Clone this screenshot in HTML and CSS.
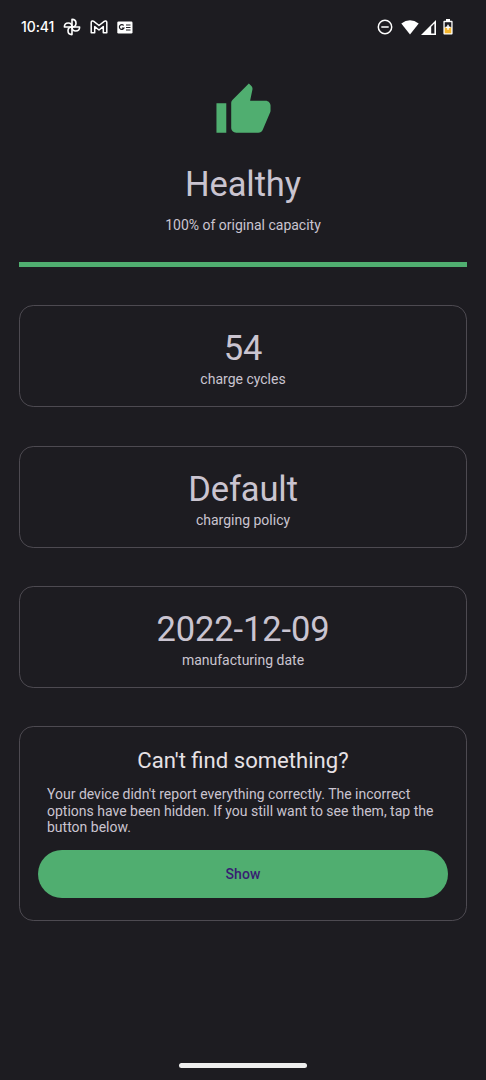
FILE: index.html
```html
<!DOCTYPE html>
<html lang="en">
<head>
<meta charset="utf-8">
<title>Battery health</title>
<link rel="stylesheet" href="styles.css">
</head>
<body>
<div class="screen">
  <header class="status">
    <span class="clock">10:41</span>
    <svg class="fan" width="18" height="18" viewBox="0 0 18 18" fill="none" stroke="#fff" stroke-width="1.600" stroke-linejoin="round">
      <path d="M9 9V1.400c2.400 0 4 1.600 4 3.800S11.400 9 9 9z"/>
      <path d="M9 9h7.600c0 2.400-1.600 4-3.800 4S9 11.400 9 9z"/>
      <path d="M9 9v7.600c-2.400 0-4-1.600-4-3.800S6.600 9 9 9z"/>
      <path d="M9 9H1.400c0-2.400 1.600-4 3.800-4S9 6.600 9 9z"/>
    </svg>
    <svg class="mail" width="18" height="14" viewBox="0 0 18 14" fill="none" stroke="#fff" stroke-width="1.500" stroke-linejoin="round">
      <path d="M1.200 12.800V2.400C1.200 1 2.800.6 3.800 1.400L9 5.500l5.200-4.100c1-.8 2.600-.4 2.600 1v10.400h-3.500V6.600L9 10 4.700 6.600v6.200z"/>
    </svg>
    <svg class="news" width="16" height="13" viewBox="0 0 16 13">
      <rect x=".3" y=".5" width="15.200" height="12" rx="1.200" fill="#fff"/>
      <path d="M6.700 4.500A2.400 2.400 0 1 0 7 7H4.900M9 4h4.500M9 6.500h4.500M9 9h4.500" fill="none" stroke="#1d1c21" stroke-width="1.200"/>
    </svg>
    <svg class="dnd" width="16" height="16" viewBox="0 0 16 16" fill="none" stroke="#fff" stroke-width="1.500">
      <circle cx="8" cy="8" r="6.700"/><path d="M4.300 8h7.400"/>
    </svg>
    <svg class="wifi" width="18" height="15" viewBox="0 0 18 15"><path d="M.3 3.500Q9-3.100 17.700 3.500L9 14.500z" fill="#fff"/></svg>
    <svg class="signal" width="15" height="15" viewBox="0 0 15 15"><path d="M0 15L15 0v15z" fill="#fff"/><path d="M10.200 6.800L13.400 3.600v9.800h-3.200z" fill="#1d1c21"/></svg>
    <svg class="battery" width="10" height="16" viewBox="0 0 10 16">
      <path d="M3 0h4v1.700h1.700q.9 0 .9.900v12q0 1-.9 1H1.300q-.9 0-.9-1v-12q0-.9.900-.9H3z" fill="#fff"/>
      <path d="M1.700 3.200h6.600v5.200H1.700z" fill="#1d1c21"/>
      <path d="M1.700 8.400h6.600v5.900H1.700z" fill="#f5b62f"/>
      <path d="M5 5.700v5M2.700 8.200h4.600" stroke="#fff" stroke-width="1.500"/>
    </svg>
  </header>
  <main class="content">
    <section class="health">
      <svg class="thumb" width="59" height="59" viewBox="0 0 24 24" fill="#50ae70">
        <path d="M1 21h4V9H1v12zm22-11c0-1.100-.9-2-2-2h-6.310l.95-4.570.03-.32c0-.41-.17-.79-.44-1.060L14.170 1 7.590 7.590C7.220 7.950 7 8.450 7 9v10c0 1.100.9 2 2 2h9c.83 0 1.540-.5 1.840-1.220l3.020-7.050c.09-.23.14-.47.14-.73v-2z"/>
      </svg>
      <h1 class="value">Healthy</h1>
      <p class="label">100% of original capacity</p>
      <div class="bar"></div>
    </section>
    <section class="card"><div class="value">54</div><div class="label">charge cycles</div></section>
    <section class="card"><div class="value">Default</div><div class="label">charging policy</div></section>
    <section class="card"><div class="value">2022-12-09</div><div class="label">manufacturing date</div></section>
    <section class="card help">
      <h2 class="title">Can't find something?</h2>
      <p class="text">Your device didn't report everything correctly. The incorrect options have been hidden. If you still want to see them, tap the button below.</p>
      <button class="show">Show</button>
    </section>
  </main>
  <div class="handle"></div>
</div>
</body>
</html>
```
FILE: styles.css
```css
* { box-sizing: border-box; margin: 0; }
body { background: #1d1c21; font-family: Roboto, sans-serif; color: #cac4d0; }
.screen { width: 486px; height: 1080px; display: flex; flex-direction: column; align-items: center; overflow: hidden; }
.status { width: 100%; height: 54px; flex: none; display: flex; align-items: center; padding: 0 33px 0 21px; color: #fff; }
.status svg { flex: none; }
.clock { width: 42px; font: 500 14px/20px Inter, sans-serif; letter-spacing: -.1px; white-space: nowrap; }
.mail { margin-left: 9px; }
.news { margin-left: 9px; }
.dnd { margin-left: auto; }
.wifi { margin-left: 8px; }
.signal { margin-left: 2px; }
.battery { margin-left: 7px; }
.content { width: 448px; display: flex; flex-direction: column; gap: 38.300px; }
.health { display: flex; flex-direction: column; align-items: center; height: 213px; padding-top: 27px; }
.value { font-size: 34.500px; line-height: 42px; font-weight: 400; letter-spacing: -.1px; text-align: center; }
.health .value { margin-top: 22.500px; }
.label { font-size: 14px; line-height: 20px; text-align: center; }
.health .label { margin-top: 10px; }
.bar { width: 100%; height: 5px; background: #50ae70; margin-top: auto; }
.card { height: 102px; border: 1px solid #4d4a51; border-radius: 14.200px; padding-top: 21px; }
.card + .card { margin-top: -.1px; }
.help { height: 195px; padding: 16px 18px 0; }
.title { font-size: 22.100px; line-height: 34px; font-weight: 400; color: #e6e1e5; text-align: center; }
.text { padding: 9px 9px 0; font-size: 14px; line-height: 16.600px; }
.show { display: block; width: 100%; height: 48px; margin-top: 14.300px; border: 0; border-radius: 24px; background: #50ae70; color: #381e72; font: 500 14px/20px Roboto, sans-serif; letter-spacing: .1px; }
.handle { width: 128px; height: 5px; border-radius: 3px; background: #eee; margin: auto 0 12px; flex: none; }
```
